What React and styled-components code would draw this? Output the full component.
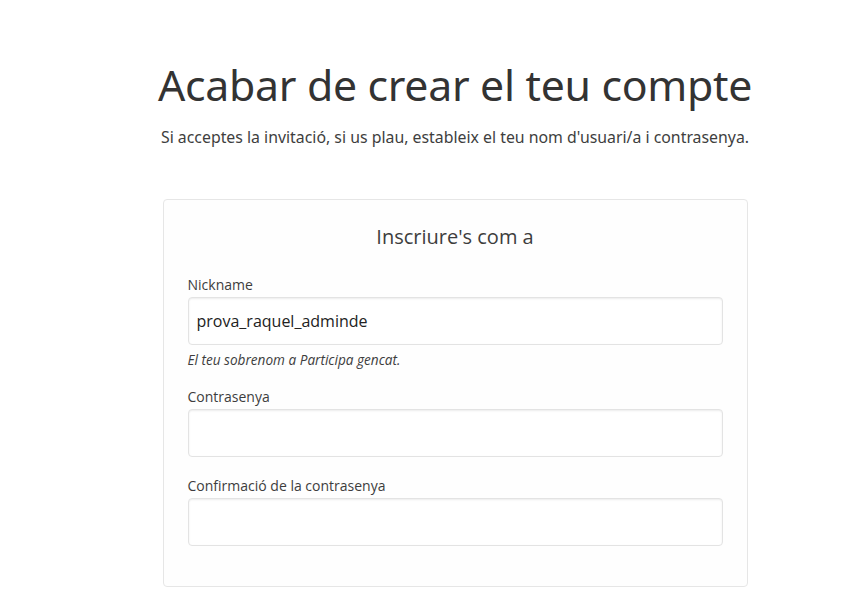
import React from "react";
import styled, { createGlobalStyle } from "styled-components";

const GlobalStyle = createGlobalStyle`
  * { box-sizing: border-box; }
  body {
    margin: 0;
    background: #fff;
    font-family: "Open Sans", "Liberation Sans", sans-serif;
    color: #3d3d3d;
  }
`;

const Page = styled.main`
  display: flex;
  flex-direction: column;
  align-items: center;
  padding: 53px 0 0 47px;
`;

const Title = styled.h1`
  margin: 0;
  font-family: "Noto Sans", "Open Sans", sans-serif;
  font-weight: 400;
  font-size: 42.8px;
  line-height: 64px;
  color: #333;
  letter-spacing: -0.3px;
`;

const Lead = styled.p`
  margin: 7px 0 0;
  font-family: "Noto Sans", "Open Sans", sans-serif;
  font-size: 15.85px;
  line-height: 26px;
  color: #3e3e3e;
`;

const Card = styled.section`
  margin-top: 49px;
  width: 585px;
  padding: 22px 24px 40px;
  background: #fefefe;
  border: 1px solid #e6e6e6;
  border-radius: 4px;
`;

const CardTitle = styled.h2`
  margin: 0 0 23px;
  text-align: center;
  font-weight: 400;
  font-size: 20px;
  line-height: 30px;
  color: #3d3d3d;
`;

const Field = styled.div`
  display: flex;
  flex-direction: column;
  margin-bottom: ${({ $gap }) => $gap}px;
`;

const Label = styled.label`
  font-size: 14px;
  line-height: 20px;
  color: #3d3d3d;
  margin-bottom: 2px;
`;

const Input = styled.input`
  height: 48px;
  width: 100%;
  padding: 0 8px;
  font-family: "Open Sans", sans-serif;
  font-size: 16px;
  color: #222;
  background: #fff;
  border: 1px solid #e3e3e3;
  border-radius: 4px;
  box-shadow: inset 0 1px 2px rgba(0, 0, 0, 0.08);
  outline: none;
`;

const Help = styled.p`
  margin: 6px 0 0;
  font-size: 13.6px;
  font-style: italic;
  line-height: 18px;
  color: #3d3d3d;
`;

export default function App() {
  return (
    <>
      <GlobalStyle />
      <Page>
        <Title>Acabar de crear el teu compte</Title>
        <Lead>
          Si acceptes la invitació, si us plau, estableix el teu nom d'usuari/a i contrasenya.
        </Lead>
        <Card>
          <CardTitle>Inscriure's com a</CardTitle>
          <Field $gap={18}>
            <Label>Nickname</Label>
            <Input defaultValue="prova_raquel_adminde" />
            <Help>El teu sobrenom a Participa gencat.</Help>
          </Field>
          <Field $gap={19}>
            <Label>Contrasenya</Label>
            <Input type="password" />
          </Field>
          <Field $gap={0}>
            <Label>Confirmació de la contrasenya</Label>
            <Input type="password" />
          </Field>
        </Card>
      </Page>
    </>
  );
}
